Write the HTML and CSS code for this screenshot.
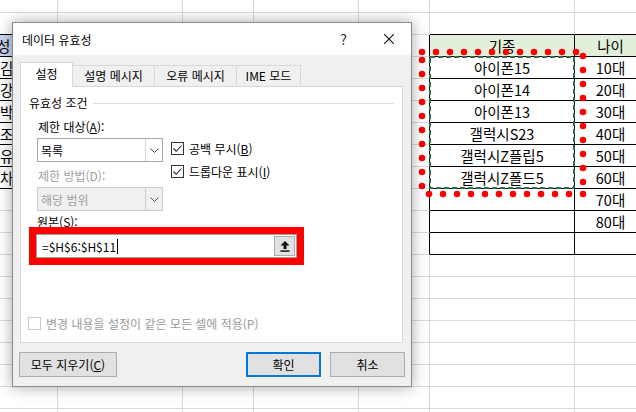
FILE: index.html
```html
<!DOCTYPE html>
<html lang="ko">
<head>
    <meta charset="UTF-8">
    <title>데이터 유효성</title>
    <link rel="stylesheet" href="styles.css">
</head>
<body>
<div class="sheet">
    <table class="grid">
        <colgroup>
            <col class="c58"><col class="c125"><col class="c71"><col class="c105"><col class="c71"><col class="c145"><col class="c72">
        </colgroup>
        <tr class="r-top"><td></td><td></td><td></td><td></td><td></td><td></td><td></td></tr>
        <tr><td class="kb"></td><td></td><td></td><td></td><td></td><td class="kb"></td><td class="kb"></td></tr>
        <tr><td class="nm nh kb"><span class="hind">성</span></td><td></td><td></td><td></td><td class="kr"></td><td class="hd kb kr">기종</td><td class="hd kb kr">나이</td></tr>
        <tr><td class="nm kb">김</td><td></td><td></td><td></td><td class="kr"></td><td class="kb kr">아이폰15</td><td class="kb kr">10대</td></tr>
        <tr><td class="nm kb">강</td><td></td><td></td><td></td><td class="kr"></td><td class="kb kr">아이폰14</td><td class="kb kr">20대</td></tr>
        <tr><td class="nm kb">박</td><td></td><td></td><td></td><td class="kr"></td><td class="kb kr">아이폰13</td><td class="kb kr">30대</td></tr>
        <tr><td class="nm kb">조</td><td></td><td></td><td></td><td class="kr"></td><td class="kb kr">갤럭시S23</td><td class="kb kr">40대</td></tr>
        <tr><td class="nm kb">유</td><td></td><td></td><td></td><td class="kr"></td><td class="kb kr">갤럭시Z플립5</td><td class="kb kr">50대</td></tr>
        <tr><td class="nm kb">차</td><td></td><td></td><td></td><td class="kr"></td><td class="kb kr">갤럭시Z폴드5</td><td class="kb kr">60대</td></tr>
        <tr><td></td><td></td><td></td><td></td><td class="kr"></td><td class="kb kr"></td><td class="kb kr">70대</td></tr>
        <tr><td></td><td></td><td></td><td></td><td class="kr"></td><td class="kb kr"></td><td class="kb kr">80대</td></tr>
        <tr><td></td><td></td><td></td><td></td><td class="kr"></td><td class="kb kr"></td><td class="kb kr"></td></tr>
        <tr><td></td><td></td><td></td><td></td><td></td><td></td><td></td></tr>
        <tr><td></td><td></td><td></td><td></td><td></td><td></td><td></td></tr>
        <tr><td></td><td></td><td></td><td></td><td></td><td></td><td></td></tr>
        <tr><td></td><td></td><td></td><td></td><td></td><td></td><td></td></tr>
        <tr><td></td><td></td><td></td><td></td><td></td><td></td><td></td></tr>
        <tr><td></td><td></td><td></td><td></td><td></td><td></td><td></td></tr>
        <tr><td></td><td></td><td></td><td></td><td></td><td></td><td></td></tr>
        <tr><td></td><td></td><td></td><td></td><td></td><td></td><td></td></tr>
    </table>

    <!-- copy marquee + hand drawn red dotted frame -->
    <svg class="marks" width="636" height="412" viewBox="0 0 636 412">
        <rect x="430" y="57" width="144" height="131" fill="none" stroke="#2c6e4b" stroke-width="2" stroke-dasharray="5 3"/>
        <g fill="none" stroke="#ff0000" stroke-width="6.5" stroke-linecap="round" stroke-dasharray="0 14">
            <path d="M422 52H577"/>
            <path d="M422 60V187"/>
            <path d="M429 194H584"/>
            <path d="M583 56V187"/>
        </g>
    </svg>

    <div class="dialog">
        <div class="titlebar">
            <span class="title">데이터 유효성</span>
            <span class="cap help">?</span>
            <span class="cap">
                <svg width="10" height="10" viewBox="0 0 10 10"><path d="M0 0L10 10M10 0L0 10" stroke="#111" stroke-width="1.1"/></svg>
            </span>
        </div>
        <div class="dlg-body">
            <div class="tabs">
                <div class="tab active">설정</div>
                <div class="tab t82">설명 메시지</div>
                <div class="tab t82">오류 메시지</div>
                <div class="tab t64">IME 모드</div>
            </div>
            <div class="panel">
                <div class="group"><span>유효성 조건</span></div>
                <div class="cond">
                    <div class="cond-left">
                        <div class="lbl">제한 대상(<u>A</u>):</div>
                        <div class="combo">
                            <span>목록</span>
                            <span class="drop"><svg width="9" height="5" viewBox="0 0 9 5"><path d="M0.5 0.5L4.5 4.5L8.5 0.5" fill="none" stroke="#444" stroke-width="1"/></svg></span>
                        </div>
                        <div class="lbl dis gap6">제한 방법(D):</div>
                        <div class="combo off">
                            <span>해당 범위</span>
                            <span class="drop"><svg width="9" height="5" viewBox="0 0 9 5"><path d="M0.5 0.5L4.5 4.5L8.5 0.5" fill="none" stroke="#555" stroke-width="1"/></svg></span>
                        </div>
                    </div>
                    <div class="cond-right">
                        <div class="chk">
                            <span class="box"><svg width="11" height="11" viewBox="0 0 11 11"><path d="M1.5 5.5L4.2 8.3L9.5 2.5" fill="none" stroke="#222" stroke-width="1.1"/></svg></span>
                            <span>공백 무시(<u>B</u>)</span>
                        </div>
                        <div class="chk">
                            <span class="box"><svg width="11" height="11" viewBox="0 0 11 11"><path d="M1.5 5.5L4.2 8.3L9.5 2.5" fill="none" stroke="#222" stroke-width="1.1"/></svg></span>
                            <span>드롭다운 표시(<u>I</u>)</span>
                        </div>
                    </div>
                </div>
                <div class="lbl src">원본(<u>S</u>):</div>
                <div class="red-box">
                    <div class="ref-input">
                        <span>=$H$6:$H$11</span><span class="caret"></span>
                        <span class="collapse">
                            <svg width="10" height="11" viewBox="0 0 10 11"><path d="M5 0L9.5 4.5H6.5V8H3.5V4.5H0.5Z" fill="#111"/><rect x="0.5" y="9.3" width="9" height="1.5" fill="#111"/></svg>
                        </span>
                    </div>
                </div>
                <div class="chk apply">
                    <span class="box off"></span>
                    <span>변경 내용을 설정이 같은 모든 셀에 적용(P)</span>
                </div>
            </div>
            <div class="buttons">
                <button class="btn wide">모두 지우기(<u>C</u>)</button>
                <span class="spacer"></span>
                <button class="btn ok">확인</button>
                <button class="btn">취소</button>
            </div>
        </div>
    </div>
</div>
</body>
</html>
```

FILE: styles.css
```css
body { margin: 0; background: #fff; font-family: "Noto Sans CJK KR", "Noto Sans", sans-serif; }
.sheet { position: relative; width: 636px; height: 412px; overflow: hidden; }

/* spreadsheet */
.grid { border-collapse: separate; border-spacing: 0; table-layout: fixed; width: 647px; font-size: 14.5px; color: #000; }
.c58 { width: 58px; } .c125 { width: 125px; } .c71 { width: 71px; } .c105 { width: 105px; } .c145 { width: 145px; } .c72 { width: 72px; }
.grid td { box-sizing: border-box; height: 22px; padding: 0; border-right: 1px solid #d9d9d9; border-bottom: 1px solid #d9d9d9; text-align: center; white-space: nowrap; overflow: hidden; line-height: 20px; }
.grid .r-top td { height: 13px; }
.grid td.kb { border-bottom-color: #000; }
.grid td.kr { border-right-color: #000; }
.grid td.hd { background: #e2efda; }
.grid td.nh { background: #c9d7ee; }
.grid td.nm { text-align: left; }
.hind { margin-left: -3px; }

.marks { position: absolute; left: 0; top: 0; pointer-events: none; }

/* dialog window */
.dialog { position: absolute; left: 12px; top: 22px; width: 400px; height: 365px; box-sizing: border-box; border: 1px solid #8a8a8a; background: #f0f0f0; box-shadow: 0 0 14px rgba(0,0,0,0.35); display: flex; flex-direction: column; font-size: 12px; color: #000; z-index: 2; }
.titlebar { height: 32px; background: #fff; display: flex; align-items: center; padding-left: 9px; }
.title { flex: 1; }
.cap { width: 45px; height: 32px; display: flex; align-items: center; justify-content: center; }
.help { font-size: 14px; color: #222; }

.dlg-body { flex: 1; display: flex; flex-direction: column; padding: 7px 6px 9px; }
.tabs { display: flex; align-items: flex-end; height: 24px; margin-left: 1px; }
.tab { box-sizing: border-box; height: 21px; line-height: 19px; text-align: center; border: 1px solid #d9d9d9; border-left: none; border-bottom: none; background: #f0f0f0; }
.tab.active { width: 53px; height: 25px; line-height: 21px; margin-bottom: -1px; background: #fff; border-left: 1px solid #d9d9d9; position: relative; z-index: 1; }
.t82 { width: 82px; }
.t64 { width: 64px; }

.panel { box-sizing: border-box; height: 257px; margin: 0 2px 0 1px; background: #fff; border: 1px solid #d9d9d9; padding: 0 8px 11px; display: flex; flex-direction: column; }
.group { margin-top: 8px; height: 16px; line-height: 16px; display: flex; align-items: center; gap: 5px; }
.group::after { content: ""; flex: 1; height: 1px; background: #dcdcdc; }

.cond { display: flex; margin-top: 8px; padding-left: 8px; }
.cond-left { width: 126px; }
.lbl { height: 16px; line-height: 16px; padding-left: 1px; }
.dis { color: #a0a0a0; }
.gap6 { margin-top: 6px; }
.combo { box-sizing: border-box; height: 24px; margin-top: 3px; border: 1px solid #a6a6a6; display: flex; align-items: center; padding-left: 3px; }
.combo.off { background: #f0f0f0; border-color: #cccccc; color: #a0a0a0; }
.drop { margin-left: auto; width: 17px; height: 100%; box-sizing: border-box; border-left: 1px solid #d4d4d4; display: flex; align-items: center; justify-content: center; }
.combo.off .drop { border-left-color: #cccccc; }

.cond-right { margin-left: 8px; margin-top: 18px; }
.chk { display: flex; align-items: center; height: 23px; gap: 5px; }
.box { box-sizing: border-box; width: 13px; height: 13px; border: 1px solid #333; background: #fff; display: flex; align-items: center; justify-content: center; }
.box.off { border-color: #c8c8c8; }

.src { margin-top: 3px; padding-left: 8px; }
.red-box { box-sizing: border-box; width: 275px; height: 38px; margin-top: -3px; border: 7px solid #ff0000; position: relative; }
.ref-input { box-sizing: border-box; height: 24px; border: 1px solid #a0a0a0; background: #fff; display: flex; align-items: center; padding-left: 5px; }
.caret { width: 1px; height: 15px; background: #000; margin-left: 1px; }
.collapse { margin-left: auto; margin-right: 1px; box-sizing: border-box; width: 21px; height: 20px; background: #e1e1e1; border: 1px solid #adadad; display: flex; align-items: center; justify-content: center; }

.apply { margin-top: auto; height: 16px; margin-left: -1px; color: #9a9a9a; }

.buttons { display: flex; gap: 9px; margin-top: 9px; height: 25px; }
.spacer { flex: 1; }
.btn { box-sizing: border-box; width: 75px; height: 25px; padding: 0; background: #e1e1e1; border: 1px solid #adadad; font: inherit; color: #000; }
.btn.wide { width: 98px; }
.btn.ok { border: 2px solid #0078d7; }
```
